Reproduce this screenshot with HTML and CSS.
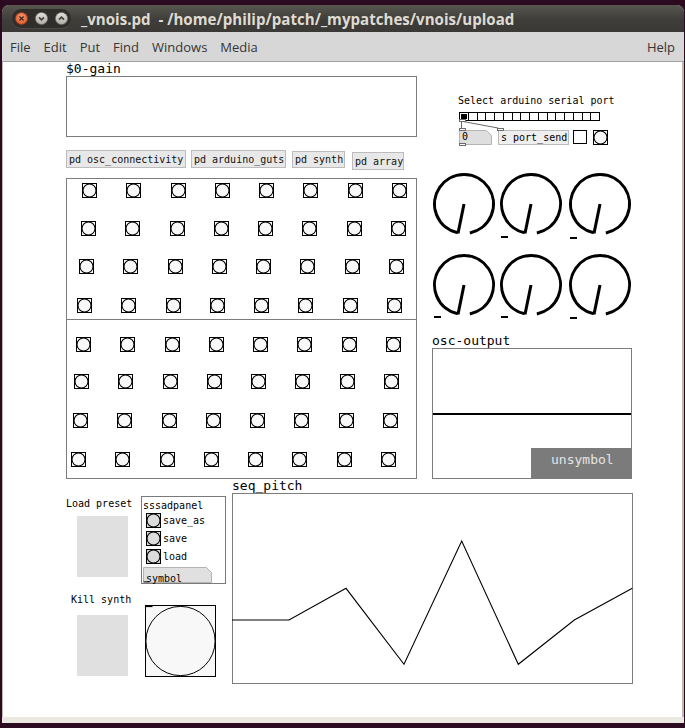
FILE: index.html
```html
<!DOCTYPE html>
<html>
<head>
<meta charset="utf-8">
<title>_vnois.pd</title>
<link rel="stylesheet" href="styles.css">
</head>
<body>
<svg class="defs" width="0" height="0" aria-hidden="true">
  <defs>
    <symbol id="bang" viewBox="0 0 15 15">
      <rect x=".5" y=".5" width="14" height="14" fill="#fff" stroke="#000"/>
      <circle cx="7.5" cy="7.5" r="6.5" fill="#f8f8f8" stroke="#000" stroke-width="1.1"/>
    </symbol>
    <symbol id="bangg" viewBox="0 0 15 15">
      <rect x=".5" y=".5" width="14" height="14" fill="#d8d8d8" stroke="#000"/>
      <circle cx="7.5" cy="7.5" r="6.5" fill="#dcdcdc" stroke="#000" stroke-width="1.1"/>
    </symbol>
    <symbol id="knob" viewBox="0 0 66 70">
      <path d="M26.67 61.81A29.5 29.5 0 1 1 38.83 61.92" fill="none" stroke="#000" stroke-width="3"/>
      <line x1="33" y1="33" x2="27" y2="62.4" stroke="#000" stroke-width="3"/>
    </symbol>
    <radialGradient id="cg" cx="50%" cy="40%" r="60%">
      <stop offset="0" stop-color="#f9a27c"/>
      <stop offset="1" stop-color="#df5124"/>
    </radialGradient>
    <linearGradient id="gg" x1="0" y1="0" x2="0" y2="1">
      <stop offset="0" stop-color="#e4e2dd"/>
      <stop offset="1" stop-color="#aeaba4"/>
    </linearGradient>
  </defs>
</svg>

<div class="window">
  <div class="titlebar">
    <div class="wbtns">
      <svg class="wb" viewBox="0 0 13 13"><circle cx="6.5" cy="6.5" r="6.1" fill="url(#cg)" stroke="#8e3a1a" stroke-width=".7"/><path d="M4.4 4.4l4.2 4.2M8.6 4.4l-4.2 4.2" stroke="#40281c" stroke-width="1.4"/></svg>
      <svg class="wb" viewBox="0 0 13 13"><circle cx="6.5" cy="6.5" r="6.1" fill="url(#gg)" stroke="#6d6b66" stroke-width=".7"/><path d="M4 5.4l2.5 2.5 2.5-2.5" fill="none" stroke="#3c3b37" stroke-width="1.5"/></svg>
      <svg class="wb" viewBox="0 0 13 13"><circle cx="6.5" cy="6.5" r="6.1" fill="url(#gg)" stroke="#6d6b66" stroke-width=".7"/><path d="M4 7.6l2.5-2.5 2.5 2.5" fill="none" stroke="#3c3b37" stroke-width="1.5"/></svg>
    </div>
    <div class="title">_vnois.pd  - /home/philip/patch/_mypatches/vnois/upload</div>
  </div>

  <div class="menubar">
    <span>File</span><span>Edit</span><span>Put</span><span>Find</span><span>Windows</span><span>Media</span>
    <span class="help">Help</span>
  </div>

  <div class="canvas">
    <!-- $0-gain graph -->
    <div class="pd gain">
      <div class="lbl13">$0-gain</div>
      <div class="graph"></div>
    </div>

    <!-- subpatches -->
    <div class="obj o1">pd osc_connectivity</div>
    <div class="obj o2">pd arduino_guts</div>
    <div class="obj o3">pd synth</div>
    <div class="obj o4">pd array</div>

    <!-- bang grid -->
    <div class="pd graph bgrid">
      <div class="half half1">
        <div class="brow r1"><svg class="b"><use href="#bang"/></svg><svg class="b"><use href="#bang"/></svg><svg class="b"><use href="#bang"/></svg><svg class="b"><use href="#bang"/></svg><svg class="b"><use href="#bang"/></svg><svg class="b"><use href="#bang"/></svg><svg class="b"><use href="#bang"/></svg><svg class="b"><use href="#bang"/></svg></div>
        <div class="brow r2"><svg class="b"><use href="#bang"/></svg><svg class="b"><use href="#bang"/></svg><svg class="b"><use href="#bang"/></svg><svg class="b"><use href="#bang"/></svg><svg class="b"><use href="#bang"/></svg><svg class="b"><use href="#bang"/></svg><svg class="b"><use href="#bang"/></svg><svg class="b"><use href="#bang"/></svg></div>
        <div class="brow r3"><svg class="b"><use href="#bang"/></svg><svg class="b"><use href="#bang"/></svg><svg class="b"><use href="#bang"/></svg><svg class="b"><use href="#bang"/></svg><svg class="b"><use href="#bang"/></svg><svg class="b"><use href="#bang"/></svg><svg class="b"><use href="#bang"/></svg><svg class="b"><use href="#bang"/></svg></div>
        <div class="brow r4"><svg class="b"><use href="#bang"/></svg><svg class="b"><use href="#bang"/></svg><svg class="b"><use href="#bang"/></svg><svg class="b"><use href="#bang"/></svg><svg class="b"><use href="#bang"/></svg><svg class="b"><use href="#bang"/></svg><svg class="b"><use href="#bang"/></svg><svg class="b"><use href="#bang"/></svg></div>
      </div>
      <div class="half half2">
        <div class="brow r5"><svg class="b"><use href="#bang"/></svg><svg class="b"><use href="#bang"/></svg><svg class="b"><use href="#bang"/></svg><svg class="b"><use href="#bang"/></svg><svg class="b"><use href="#bang"/></svg><svg class="b"><use href="#bang"/></svg><svg class="b"><use href="#bang"/></svg><svg class="b"><use href="#bang"/></svg></div>
        <div class="brow r6"><svg class="b"><use href="#bang"/></svg><svg class="b"><use href="#bang"/></svg><svg class="b"><use href="#bang"/></svg><svg class="b"><use href="#bang"/></svg><svg class="b"><use href="#bang"/></svg><svg class="b"><use href="#bang"/></svg><svg class="b"><use href="#bang"/></svg><svg class="b"><use href="#bang"/></svg></div>
        <div class="brow r7"><svg class="b"><use href="#bang"/></svg><svg class="b"><use href="#bang"/></svg><svg class="b"><use href="#bang"/></svg><svg class="b"><use href="#bang"/></svg><svg class="b"><use href="#bang"/></svg><svg class="b"><use href="#bang"/></svg><svg class="b"><use href="#bang"/></svg><svg class="b"><use href="#bang"/></svg></div>
        <div class="brow r8"><svg class="b"><use href="#bang"/></svg><svg class="b"><use href="#bang"/></svg><svg class="b"><use href="#bang"/></svg><svg class="b"><use href="#bang"/></svg><svg class="b"><use href="#bang"/></svg><svg class="b"><use href="#bang"/></svg><svg class="b"><use href="#bang"/></svg><svg class="b"><use href="#bang"/></svg></div>
      </div>
    </div>

    <!-- serial port selection -->
    <div class="pd serial">
      <div class="cap10 scap">Select arduino serial port</div>
      <div class="hradio"><i class="sel"></i><i></i><i></i><i></i><i></i><i></i><i></i><i></i><i></i><i></i><i></i><i></i><i></i><i></i><i></i><i></i></div>
      <div class="srow">
        <div class="nbox">
          <svg viewBox="0 0 33 15"><path d="M.5 .5H27.5L32.5 5.5V14.5H.5Z" fill="#dedede" stroke="#b4b4b4"/></svg>
          <span>0</span>
        </div>
        <div class="sbox">s port_send</div>
        <div class="tgl"></div>
        <svg class="sbang"><use href="#bang"/></svg>
      </div>
      <svg class="wires" viewBox="0 0 60 56">
        <rect x="4.5" y="24.5" width="6" height="2" fill="#fff" stroke="#6a6a6a"/>
        <line x1="6.5" y1="26" x2="6.5" y2="34" stroke="#6a6a6a"/>
        <line x1="8" y1="26.5" x2="43" y2="33" stroke="#6a6a6a"/>
        <rect x="4.5" y="33.5" width="6" height="2" fill="#fff" stroke="#6a6a6a"/>
        <rect x="42.5" y="33.5" width="6" height="2" fill="#fff" stroke="#6a6a6a"/>
        <rect x="4.5" y="48.5" width="6" height="2" fill="#fff" stroke="#6a6a6a"/>
      </svg>
    </div>

    <!-- knobs -->
    <div class="pd knobs">
      <svg class="knob" viewBox="0 0 66 70"><use href="#knob"/></svg>
      <svg class="knob" viewBox="0 0 66 70"><use href="#knob"/><rect x="3" y="65" width="7" height="2"/></svg>
      <svg class="knob" viewBox="0 0 66 70"><use href="#knob"/><rect x="3" y="66" width="7" height="2"/></svg>
      <svg class="knob" viewBox="0 0 66 70"><use href="#knob"/><rect x="3" y="64" width="7" height="2"/></svg>
      <svg class="knob" viewBox="0 0 66 70"><use href="#knob"/><rect x="3" y="64" width="7" height="2"/></svg>
      <svg class="knob" viewBox="0 0 66 70"><use href="#knob"/><rect x="3" y="65" width="7" height="2"/></svg>
    </div>

    <!-- osc-output -->
    <div class="pd osc">
      <div class="lbl13">osc-output</div>
      <div class="graph">
        <div class="hline"></div>
        <div class="unsym">unsymbol</div>
      </div>
    </div>

    <!-- seq_pitch -->
    <div class="pd seq">
      <div class="lbl13">seq_pitch</div>
      <div class="graph">
        <svg class="plot" viewBox="0 0 399 189"><polyline points="-1,126 56,126 113,94.3 171,170.3 228.7,47 285.3,170.3 341.3,126 399.3,94.3" fill="none" stroke="#000" stroke-width="1.1"/></svg>
      </div>
    </div>

    <!-- presets -->
    <div class="pd lp">
      <div class="cap10">Load preset</div>
      <div class="gbox gb1"></div>
    </div>
    <div class="pd ks">
      <div class="cap10">Kill synth</div>
      <div class="gbox gb2"></div>
    </div>

    <div class="pd panel">
      <div class="cap10">sssadpanel</div>
      <div class="prow first"><svg class="b"><use href="#bangg"/></svg><span class="cap10">save_as</span></div>
      <div class="prow"><svg class="b"><use href="#bangg"/></svg><span class="cap10">save</span></div>
      <div class="prow"><svg class="b"><use href="#bangg"/></svg><span class="cap10">load</span></div>
      <div class="symbox">
        <svg viewBox="0 0 69 16"><path d="M.5 .5H63.5L68.5 5.5V15.5H.5Z" fill="#e0e0e0" stroke="#b4b4b4"/><rect x=".5" y="14" width="6" height="1.5" fill="#555"/></svg>
        <span>symbol</span>
      </div>
    </div>

    <svg class="pd bigbang" viewBox="0 0 71 72">
      <rect x=".5" y=".5" width="70" height="71" fill="#f8f8f8" stroke="#000"/>
      <rect x=".5" y=".5" width="7" height="1.6" fill="#000"/>
      <circle cx="35.5" cy="36" r="34.6" fill="#f8f8f8" stroke="#000"/>
    </svg>
  </div>
  <div class="bottomstrip"></div>
</div>
</body>
</html>
```

FILE: styles.css
```css
* { box-sizing: border-box; }
html, body { margin: 0; padding: 0; }
body {
  background: #2c0a1f;
  width: 685px;
  height: 728px;
  overflow: hidden;
  padding: 5px 0 0 2px;
  font-family: "DejaVu Sans Mono", monospace;
  color: #000;
}
.defs { position: absolute; width: 0; height: 0; }

.window {
  width: 682px;
  border-radius: 7px 7px 0 0;
  overflow: hidden;
  background: #bdb9b0;
}
.titlebar {
  height: 27px;
  display: flex;
  align-items: center;
  padding-left: 10px;
  background: linear-gradient(#57564f, #3e3d39 55%, #3a3935);
}
.wbtns {
  display: flex;
  gap: 7px;
  padding: 3px;
  border-radius: 10px;
  background: #2f2e2b;
  box-shadow: 0 1px 0 rgba(255,255,255,.08);
}
.wb { width: 13px; height: 13px; display: block; }
.title {
  margin-left: 10px;
  font-family: "Open Sans", sans-serif;
  font-weight: 700;
  font-size: 15.1px;
  color: #dfdbd2;
  white-space: pre;
}

.menubar {
  height: 30px;
  background: #d7d7d7;
  border-bottom: 1px solid #a3a3a3;
  display: flex;
  align-items: center;
  gap: 13px;
  padding: 0 9px 0 8px;
  font-family: "Open Sans", sans-serif;
  font-size: 13px;
  color: #353535;
}
.menubar .help { margin-left: auto; }

.canvas {
  position: relative;
  height: 655px;
  margin: 0 2px 0 1px;
  background: #fff;
}
.bottomstrip { height: 6px; background: #ebe8e1; }

/* Pd canvas objects */
.pd { position: absolute; }
.lbl13 { font-size: 13px; line-height: 14px; white-space: pre; }
.cap10 { font-size: 10px; line-height: 12px; white-space: pre; }
.graph { position: relative; border: 1px solid #7c7c7c; background: #fff; }

.gain { left: 63px; top: 0; }
.gain .graph { width: 351px; height: 61px; }

.obj {
  position: absolute;
  height: 18px;
  border: 1px solid #bcbcbc;
  background: #e8e8e8;
  font-size: 10px;
  line-height: 17px;
  padding: 0 2px;
  color: #111;
  white-space: pre;
}
.o1 { left: 63px; top: 88px; width: 120px; }
.o2 { left: 188px; top: 88px; width: 95px; }
.o3 { left: 289px; top: 89px; width: 53px; height: 17px; line-height: 16px; }
.o4 { left: 349px; top: 90px; width: 52px; }

.bgrid {
  left: 63px;
  top: 116px;
  width: 351px;
  height: 301px;
  display: flex;
  flex-direction: column;
}
.half1 { height: 141px; border-bottom: 1px solid #7c7c7c; padding-top: 4px; }
.half2 { flex: 1; padding-top: 17px; }
.brow { display: flex; gap: 29.3px; }
.b { width: 15px; height: 15px; display: block; flex: none; }
.r1 { margin-left: 15px; }
.r2 { margin: 23px 0 0 14px; }
.r3 { margin: 23px 0 0 12px; }
.r4 { margin: 24px 0 0 10px; }
.r5 { margin-left: 9px; }
.r6 { margin: 22px 0 0 7px; }
.r7 { margin: 24px 0 0 6px; }
.r8 { margin: 24px 0 0 4px; }

.serial { left: 452px; top: 33px; width: 160px; }
.scap { margin-left: 3px; }
.hradio {
  margin: 5px 0 0 4px;
  width: 141px;
  height: 9px;
  border: 1px solid #000;
  display: flex;
  background: #fff;
}
.hradio i { flex: 1; border-left: 1px solid #000; }
.hradio i:first-child { border-left: 0; }
.hradio .sel { background: #000; box-shadow: inset 0 0 0 1px #fff; }
.srow { display: flex; align-items: flex-start; margin: 9px 0 0 4px; }
.nbox { position: relative; width: 33px; height: 15px; }
.nbox svg { position: absolute; left: 0; top: 0; width: 33px; height: 15px; }
.nbox span { position: relative; display: block; font-size: 10px; line-height: 14px; padding-left: 3px; }
.sbox {
  margin-left: 6px;
  width: 71px;
  height: 15px;
  border: 1px solid #bcbcbc;
  background: #efefef;
  font-size: 10px;
  line-height: 13px;
  padding-left: 2px;
  white-space: pre;
}
.tgl { margin-left: 4px; width: 14px; height: 14px; border: 1px solid #000; background: #fff; }
.sbang { margin-left: 6px; width: 15px; height: 15px; display: block; }
.wires { position: absolute; left: 0; top: 0; width: 60px; height: 56px; overflow: visible; }

.knobs {
  left: 428px;
  top: 109px;
  display: grid;
  grid-template-columns: 67px 69px 66px;
  row-gap: 11px;
}
.knob { width: 66px; height: 70px; display: block; }

.osc { left: 429px; top: 272px; }
.osc .graph { width: 200px; height: 131px; }
.hline { position: absolute; left: 0; right: 0; top: 64px; height: 2px; background: #000; }
.unsym {
  position: absolute;
  right: -1px;
  bottom: -1px;
  width: 101px;
  height: 31px;
  background: #7b7b7b;
  color: #e4e4e4;
  font-size: 13px;
  line-height: 24px;
  padding-left: 20px;
}

.seq { left: 229px; top: 417px; }
.seq .graph { width: 401px; height: 191px; }
.plot { position: absolute; left: 0; top: 0; width: 399px; height: 189px; overflow: visible; }

.lp { left: 63px; top: 436px; }
.ks { left: 68px; top: 532px; }
.gbox { width: 51px; height: 61px; background: #e0e0e0; }
.gb1 { margin: 6px 0 0 11px; }
.gb2 { margin: 9px 0 0 6px; }

.panel {
  left: 138px;
  top: 434px;
  width: 85px;
  height: 88px;
  border: 1px solid #7a7a7a;
  padding: 3px 0 0 1px;
}
.prow { display: flex; align-items: center; gap: 2px; margin: 3px 0 0 3px; }
.prow.first { margin-top: 1px; }
.symbox { position: relative; width: 69px; height: 16px; margin: 3px 0 0 0; }
.symbox svg { position: absolute; left: 0; top: 0; width: 69px; height: 16px; }
.symbox span { position: relative; font-size: 10px; line-height: 17px; padding-left: 3px; }

.bigbang { left: 142px; top: 543px; width: 71px; height: 72px; }
```
